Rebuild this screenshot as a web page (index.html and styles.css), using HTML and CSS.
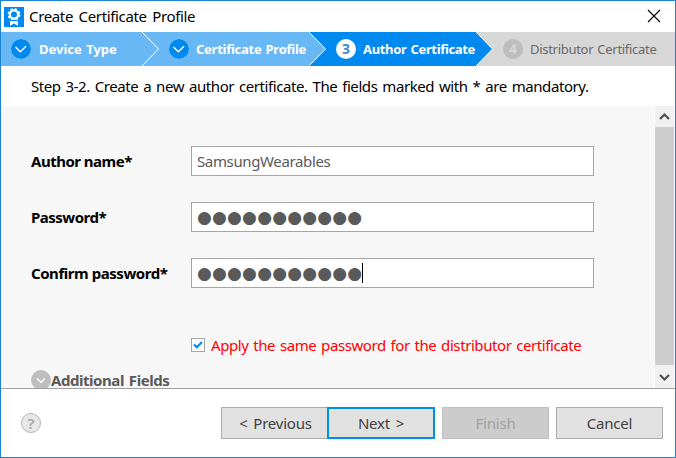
FILE: index.html
```html
<!DOCTYPE html>
<html lang="en">
<head>
<meta charset="utf-8">
<title>Create Certificate Profile</title>
<link rel="stylesheet" href="styles.css">
</head>
<body>
<div class="window">
  <header class="titlebar">
    <svg class="app-icon" width="20" height="20" viewBox="0 0 20 20"><rect width="20" height="20" fill="#0089ef"/><path d="M6 13h8v5.700L10 16.400l-4 2.300z" fill="#fff"/><circle cx="10" cy="7.500" r="5.200" fill="none" stroke="#fff" stroke-width="2.400" stroke-dasharray="2.400 1.680"/><circle cx="10" cy="7.500" r="4.100" fill="none" stroke="#fff" stroke-width="2.200"/><path d="M6 13.500h8" stroke="#0089ef"/></svg>
    <h1 class="title">Create Certificate Profile</h1>
    <svg class="close" width="14" height="14" viewBox="0 0 14 14"><path d="M1 1l12 12M13 1L1 13" stroke="#000" stroke-width="1.1"/></svg>
  </header>
  <nav class="steps">
    <div class="step done first">
      <svg class="badge" width="20" height="20" viewBox="0 0 20 20"><circle cx="10" cy="10" r="10" fill="#0089ef"/><path d="M4.500 8l4.800 4.800L15 7.200" fill="none" stroke="#fff" stroke-width="1.500"/></svg>
      <span class="step-name t-device">Device Type</span>
      <svg class="arrow" width="18" height="34" viewBox="0 0 18 34"><path d="M0 0l16.500 17L0 34z" fill="#69b8f6"/><path d="M0 0l16.500 17L0 34" fill="none" stroke="#fff"/></svg>
    </div>
    <div class="step done">
      <svg class="badge" width="20" height="20" viewBox="0 0 20 20"><circle cx="10" cy="10" r="10" fill="#0089ef"/><path d="M4.500 8l4.800 4.800L15 7.200" fill="none" stroke="#fff" stroke-width="1.500"/></svg>
      <span class="step-name t-profile">Certificate Profile</span>
      <svg class="arrow" width="18" height="34" viewBox="0 0 18 34"><path d="M0 0l16.500 17L0 34z" fill="#69b8f6"/><path d="M0 0l16.500 17L0 34" fill="none" stroke="#fff"/></svg>
    </div>
    <div class="step current">
      <span class="badge number">3</span>
      <span class="step-name t-author">Author Certificate</span>
      <svg class="arrow" width="18" height="34" viewBox="0 0 18 34"><path d="M0 0l16.500 17L0 34z" fill="#0089ef"/><path d="M0 0l16.500 17L0 34" fill="none" stroke="#fff"/></svg>
    </div>
    <div class="step pending">
      <span class="badge number">4</span>
      <span class="step-name t-distributor">Distributor Certificate</span>
    </div>
  </nav>
  <p class="intro"><span>Step 3-2. Create a new author certificate. The fields marked with * are mandatory.</span></p>
  <main class="content">
    <div class="form">
      <div class="row"><span class="label">Author name*</span><div class="field">SamsungWearables</div></div>
      <div class="row"><span class="label">Password*</span><div class="field secret">●●●●●●●●●●●</div></div>
      <div class="row"><span class="label t-confirm">Confirm password*</span><div class="field secret">●●●●●●●●●●●<i class="caret"></i></div></div>
      <div class="apply">
        <svg class="check" width="14" height="14" viewBox="0 0 14 14"><rect x=".5" y=".5" width="13" height="13" fill="#fff" stroke="#a6a6a6"/><path d="M3 6.500l2.800 2.800L11 4" fill="none" stroke="#0089ef" stroke-width="2.100"/></svg>
        <span class="apply-text">Apply the same password for the distributor certificate</span>
      </div>
      <div class="more">
        <svg width="20" height="20" viewBox="0 0 20 20"><circle cx="10" cy="10" r="10" fill="#bebebe"/><path d="M6 8.500l4 3.700 4-3.700" fill="none" stroke="#fff" stroke-width="1.500"/></svg>
        <span class="more-text">Additional Fields</span>
      </div>
    </div>
    <div class="scrollbar">
      <svg class="sb-up" width="19" height="21" viewBox="0 0 19 21"><path d="M5 13l4.500-4.500L14 13" fill="none" stroke="#505050" stroke-width="2.200"/></svg>
      <div class="thumb"></div>
      <svg class="sb-down" width="19" height="23" viewBox="0 0 19 23"><path d="M5 10l4.500 4.500L14 10" fill="none" stroke="#505050" stroke-width="2.200"/></svg>
    </div>
  </main>
  <footer class="footer">
    <span class="help">?</span>
    <div class="button prev"><span>&lt; Previous</span></div>
    <div class="button next"><span>Next &gt;</span></div>
    <div class="button finish"><span>Finish</span></div>
    <div class="button cancel"><span>Cancel</span></div>
  </footer>
</div>
</body>
</html>
```

FILE: styles.css
```css
* { box-sizing: border-box; }
body { margin: 0; font: 15px/20px "Noto Sans", "Open Sans", sans-serif; color: #000; }
svg { display: block; flex: none; }
.window { width: 676px; height: 458px; border: 1px solid #1883d7; background: #fff; display: flex; flex-direction: column; overflow: hidden; white-space: nowrap; }
.titlebar { height: 31px; display: flex; align-items: center; padding: 0 14px 0 3px; }
.title { margin: 0 0 1px 5px; font-size: 15px; font-weight: 400; letter-spacing: -.35px; word-spacing: 2px; }
.close { margin: 0 0 1px auto; }
.steps { height: 34px; display: flex; color: #fff; font-size: 13px; }
.step { position: relative; width: 167px; height: 34px; display: flex; align-items: center; padding-left: 27px; }
.first { width: 141px; padding-left: 10px; }
.done { background: #69b8f6; font-weight: 700; }
.current { background: #0089ef; font-weight: 700; }
.pending { background: #d7d7d7; color: #686868; flex: 1; }
.arrow { position: absolute; left: 100%; top: 0; z-index: 1; }
.badge { flex: none; width: 20px; height: 20px; border-radius: 50%; text-align: center; }
.number { font-weight: 700; font-size: 14px; line-height: 20px; }
.current .number { background: #fff; color: #3b8dc8; }
.pending .number { background: #bdbdbd; color: #d7d7d7; }
.step-name { margin-left: 7px; line-height: 18px; padding-bottom: 1px; word-spacing: 1px; }
.t-device { margin-left: 8px; }
.t-profile { letter-spacing: -.26px; }
.t-author { letter-spacing: -.34px; }
.t-distributor { letter-spacing: -.29px; }
.intro { height: 40px; margin: 0; padding: 10px 0 0 30px; line-height: 20px; letter-spacing: -.42px; word-spacing: 1.4px; }
.content { height: 282px; display: flex; background: #f7f7f7; overflow: hidden; }
.form { width: 653px; padding: 40px 0 0 30px; }
.row { height: 30px; margin-bottom: 26px; display: flex; align-items: center; }
.label { width: 160px; font-weight: 700; letter-spacing: -.5px; }
.t-confirm { letter-spacing: -.45px; }
.field { width: 403px; height: 30px; border: 1px solid #a6a6a6; background: #fff; color: #5a5a5a; padding-left: 5px; line-height: 28px; display: flex; align-items: center; letter-spacing: -.37px; }
.secret { font: 17px/28px "DejaVu Sans", sans-serif; letter-spacing: .2px; }
.caret { width: 1px; height: 20px; background: #000; }
.apply { display: flex; align-items: center; height: 22px; margin: 46px 0 0 160px; color: #f00; }
.apply-text { margin-left: 6px; letter-spacing: -.42px; word-spacing: 1.3px; }
.more { display: flex; align-items: center; margin-top: 14px; color: #5a5a5a; font-weight: 700; letter-spacing: -.45px; word-spacing: 1.500px; }
.scrollbar { width: 21px; border: solid #fff; border-width: 0 1px; background: #f0f0f0; display: flex; flex-direction: column; }
.thumb { height: 238px; background: #cdcdcd; }
.footer { height: 69px; border-top: 1px solid #a0a0a0; display: flex; align-items: flex-start; padding: 18px 0 0 20px; }
.help { width: 20px; height: 20px; margin: 6px 180px 0 0; border: 1px solid #b5b5b5; border-radius: 50%; background: #e8e8e8; color: #a8a8a8; text-align: center; line-height: 18px; font-size: 15px; font-weight: 600; }
.button { width: 107px; height: 32px; border: 1px solid #adadad; background: #e1e1e1; color: #404040; display: flex; align-items: center; justify-content: center; letter-spacing: -.2px; word-spacing: 2px; }
.prev { padding-left: 2px; }
.next { width: 108px; border: 2px solid #0090e0; margin-left: -1px; }
.finish { margin-left: 7px; background: #ccc; border-color: #bfbfbf; color: #a0a0a0; }
.cancel { margin-left: 7px; }
```
